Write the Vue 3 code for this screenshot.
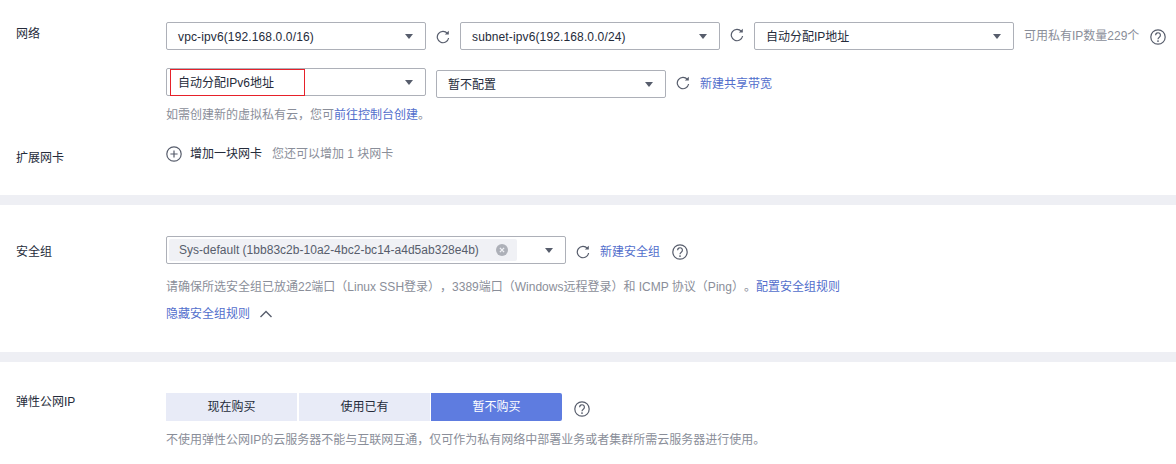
<script setup>
const tabs = [
  { label: '现在购买', active: false },
  { label: '使用已有', active: false },
  { label: '暂不购买', active: true }
]
</script>

<template>
  <div class="page">
    <section class="block net">
      <div class="label net-label">网络</div>
      <div class="content">
        <div class="line one">
          <div class="select w260"><span class="wide">vpc-ipv6(192.168.0.0/16)</span><i class="caret"></i></div>
          <svg class="refresh r1" viewBox="0 0 14 14"><path d="M11.4 3.4A5.7 5.7 0 1 0 12.6 8" /><path class="fill" d="M8.8 4.6h4V.8z" /></svg>
          <div class="select w260"><span class="wide">subnet-ipv6(192.168.0.0/24)</span><i class="caret"></i></div>
          <svg class="refresh r2" viewBox="0 0 14 14"><path d="M11.4 3.4A5.7 5.7 0 1 0 12.6 8" /><path class="fill" d="M8.8 4.6h4V.8z" /></svg>
          <div class="select w260"><span>自动分配IP地址</span><i class="caret"></i></div>
          <span class="muted avail">可用私有IP数量229个</span>
          <svg class="help help-a" viewBox="0 0 16 16"><circle cx="8" cy="8" r="7.2" /><path d="M5.6 6.2a2.4 2.4 0 1 1 3.7 2c-.9.6-1.3 1-1.3 2" /><circle class="fill" cx="8" cy="12.1" r=".9" /></svg>
        </div>
        <div class="line two">
          <div class="select w260 boxed">
            <span>自动分配IPv6地址</span><i class="caret"></i>
            <div class="redbox"></div>
          </div>
          <div class="select w230 low"><span>暂不配置</span><i class="caret"></i></div>
          <svg class="refresh r3" viewBox="0 0 14 14"><path d="M11.4 3.4A5.7 5.7 0 1 0 12.6 8" /><path class="fill" d="M8.8 4.6h4V.8z" /></svg>
          <a class="link">新建共享带宽</a>
        </div>
        <div class="muted hint-net">如需创建新的虚拟私有云，您可<a class="link">前往控制台创建</a>。</div>
      </div>
    </section>
    <section class="block ext">
      <div class="label ext-label">扩展网卡</div>
      <div class="add">
        <svg class="plus" viewBox="0 0 16 16"><circle cx="8" cy="8" r="7.2" /><path d="M8 4.4v7.2M4.4 8h7.2" /></svg>
        <span class="add-text">增加一块网卡</span>
        <span class="muted">您还可以增加 1 块网卡</span>
      </div>
    </section>
    <div class="band"></div>

    <section class="block sec">
      <div class="label sec-label">安全组</div>
      <div class="content">
        <div class="line">
          <div class="select w400">
            <div class="tag">
              <span>Sys-default (1bb83c2b-10a2-4bc2-bc14-a4d5ab328e4b)</span>
              <svg class="close" viewBox="0 0 12 12"><circle cx="6" cy="6" r="6" /><path d="M3.9 3.9l4.2 4.2M8.1 3.9L3.9 8.1" /></svg>
            </div>
            <i class="caret"></i>
          </div>
          <svg class="refresh r4" viewBox="0 0 14 14"><path d="M11.4 3.4A5.7 5.7 0 1 0 12.6 8" /><path class="fill" d="M8.8 4.6h4V.8z" /></svg>
          <a class="link low-link">新建安全组</a>
          <svg class="help help-b" viewBox="0 0 16 16"><circle cx="8" cy="8" r="7.2" /><path d="M5.6 6.2a2.4 2.4 0 1 1 3.7 2c-.9.6-1.3 1-1.3 2" /><circle class="fill" cx="8" cy="12.1" r=".9" /></svg>
        </div>
        <div class="muted hint-sec">请确保所选安全组已放通22端口（Linux SSH登录），3389端口（Windows远程登录）和 ICMP 协议（Ping）。<a class="link">配置安全组规则</a></div>
        <div class="toggle">
          <a class="link">隐藏安全组规则</a>
          <svg class="chev" viewBox="0 0 14 8"><path d="M1.5 7L7 1.5 12.5 7" /></svg>
        </div>
      </div>
    </section>
    <div class="band"></div>

    <section class="block eip">
      <div class="label eip-label">弹性公网IP</div>
      <div class="content">
        <div class="line">
          <div class="tabs">
            <div v-for="t in tabs" :key="t.label" class="tab" :class="{ active: t.active }">{{ t.label }}</div>
          </div>
          <svg class="help help-c" viewBox="0 0 16 16"><circle cx="8" cy="8" r="7.2" /><path d="M5.6 6.2a2.4 2.4 0 1 1 3.7 2c-.9.6-1.3 1-1.3 2" /><circle class="fill" cx="8" cy="12.1" r=".9" /></svg>
        </div>
        <div class="muted hint-eip">不使用弹性公网IP的云服务器不能与互联网互通，仅可作为私有网络中部署业务或者集群所需云服务器进行使用。</div>
      </div>
    </section>
  </div>
</template>

<style scoped>
.page {
  width: 1176px;
  height: 464px;
  overflow: hidden;
  background: #fff;
  font-family: "Liberation Sans", "Noto Sans CJK SC", sans-serif;
  font-size: 12px;
  line-height: 18px;
  color: #252b3a;
  text-spacing-trim: space-all;
}
.block { display: flex; padding-left: 16px; }
.label { width: 150px; flex: none; }
.content { flex: 1; min-width: 0; }
.line { display: flex; align-items: center; }
.net { height: 130px; padding-top: 22px; box-sizing: border-box; }
.net-label { padding-top: 3px; }
.line.two { align-items: flex-start; margin-top: 18px; }
.ext { height: 65px; padding-top: 15px; box-sizing: border-box; }
.ext-label { padding-top: 4px; }
.band { height: 10px; background: #eeeff4; }
.sec { height: 147px; padding-top: 31px; box-sizing: border-box; }
.sec-label { padding-top: 7px; }
.eip { padding-top: 31px; }
.select {
  position: relative;
  flex: none;
  height: 28px;
  box-sizing: border-box;
  display: flex;
  align-items: center;
  padding: 1px 0 0 11px;
  border: 1px solid #adb0b8;
  border-radius: 2px;
  background: #fff;
}
.wide { letter-spacing: 0.13px; }
.w260 { width: 260px; }
.w230 { width: 230px; }
.w400 { width: 400px; padding: 0 0 0 2px; }
.low { margin: 2px 0 0 10px; }
.caret {
  position: absolute;
  right: 12px;
  top: 11px;
  width: 0;
  height: 0;
  border-left: 4px solid transparent;
  border-right: 4px solid transparent;
  border-top: 5px solid #575d6c;
}
.redbox {
  position: absolute;
  left: 3px;
  top: 0;
  width: 135px;
  height: 27px;
  box-sizing: border-box;
  border: 1px solid #e6212a;
}
.refresh { width: 14px; height: 14px; flex: none; fill: none; stroke: #575d6c; stroke-width: 1.2; }
.refresh .fill { fill: #575d6c; stroke: none; }
.r1 { margin: 2px 10px 0 10px; }
.r2 { margin: -3px 10px 0 10px; }
.r3 { margin: 8px 10px 0 10px; }
.r4 { margin: 4px 10px 0 10px; }
.low-link { margin-top: 3px; }
.avail { margin-left: 10px; color: #8a8e99; }
.muted { color: #8a8e99; }
.link { color: #526ecc; text-decoration: none; }
.two > .link { margin-top: 7px; }
.help { width: 16px; height: 16px; flex: none; fill: none; stroke: #575d6c; stroke-width: 1.2; }
.help .fill { fill: #575d6c; stroke: none; }
.help-a { margin: 2px 0 0 11px; }
.help-b { margin: 4px 0 0 12px; }
.help-c { margin: 3px 0 0 12px; }
.hint-net { margin-top: 8px; }
.add { display: flex; align-items: center; height: 18px; }
.plus { width: 16px; height: 16px; fill: none; stroke: #575d6c; stroke-width: 1.2; flex: none; }
.add-text { margin: 0 10px 0 8px; }
.tag {
  width: 348px;
  height: 22px;
  box-sizing: border-box;
  display: flex;
  align-items: center;
  justify-content: space-between;
  padding: 0 9px 0 10px;
  background: #f0f1f5;
  border-radius: 2px;
  color: #575d6c;
  letter-spacing: 0.02px;
}
.close { width: 12px; height: 12px; flex: none; }
.close circle { fill: #adb0b8; }
.close path { stroke: #f0f1f5; stroke-width: 1.3; fill: none; }
.hint-sec { margin-top: 14px; }
.toggle { display: flex; align-items: center; margin-top: 9px; }
.chev { width: 14px; height: 8px; margin-left: 9px; fill: none; stroke: #575d6c; stroke-width: 1.4; }
.tabs { display: flex; gap: 2px; }
.tab {
  width: 131px;
  height: 28px;
  line-height: 29px;
  text-align: center;
  background: #e8ebf7;
}
.tab.active { background: #5e7ce0; color: #fff; margin-left: -1px; border-radius: 0 2px 2px 0; }
.hint-eip { margin-top: 10px; }
</style>
